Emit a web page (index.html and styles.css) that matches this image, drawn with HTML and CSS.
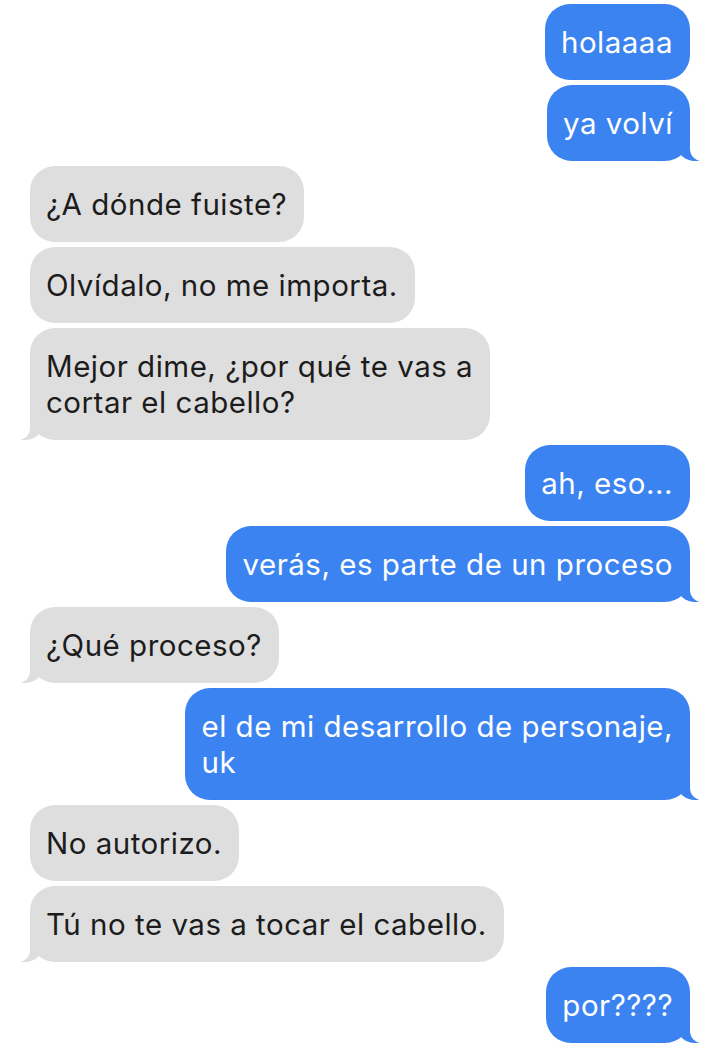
FILE: index.html
```html
<!DOCTYPE html>
<html lang="es">
<head>
<meta charset="utf-8">
<link rel="stylesheet" href="styles.css">
</head>
<body>
<div class="chat">
  <div class="msg sent">holaaaa</div>
  <div class="msg sent tail">ya volví</div>
  <div class="msg recv">¿A dónde fuiste?</div>
  <div class="msg recv">Olvídalo, no me importa.</div>
  <div class="msg recv tail">Mejor dime, ¿por qué te vas a<br>cortar el cabello?</div>
  <div class="msg sent">ah, eso...</div>
  <div class="msg sent tail">verás, es parte de un proceso</div>
  <div class="msg recv tail">¿Qué proceso?</div>
  <div class="msg sent tail">el de mi desarrollo de personaje,<br>uk</div>
  <div class="msg recv">No autorizo.</div>
  <div class="msg recv tail">Tú no te vas a tocar el cabello.</div>
  <div class="msg sent tail">por????</div>
</div>
</body>
</html>
```

FILE: styles.css
```css
html, body {
  margin: 0;
  padding: 0;
  background: #ffffff;
}
.chat {
  display: flex;
  flex-direction: column;
  gap: 5px;
  padding: 4px 29px 0 30px;
  font-family: "Inter", "Liberation Sans", sans-serif;
  font-size: 29.5px;
  letter-spacing: 0.5px;
  line-height: 36px;
}
.msg {
  position: relative;
  padding: 20px 17px 20px 16px;
  border-radius: 25px;
  max-width: 580px;
  white-space: nowrap;
}
.sent {
  align-self: flex-end;
  background: #3b83f1;
  color: #ffffff;
}
.recv {
  align-self: flex-start;
  background: #dedede;
  color: #1c1c1c;
}
.tail::before,
.tail::after {
  content: "";
  position: absolute;
  bottom: 0;
  height: 24px;
}
.sent.tail::before {
  right: -9px;
  width: 22px;
  background: #3b83f1;
  border-bottom-left-radius: 18px 16px;
}
.sent.tail::after {
  right: -30px;
  width: 30px;
  background: #ffffff;
  border-bottom-left-radius: 12px;
}
.recv.tail::before {
  left: -9px;
  width: 22px;
  background: #dedede;
  border-bottom-right-radius: 18px 16px;
}
.recv.tail::after {
  left: -30px;
  width: 30px;
  background: #ffffff;
  border-bottom-right-radius: 12px;
}
```
